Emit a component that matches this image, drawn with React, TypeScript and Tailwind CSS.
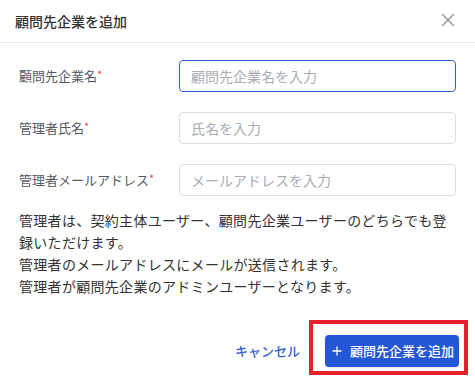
import { X, Plus } from "lucide-react";

const fields = [
  { label: "顧問先企業名", placeholder: "顧問先企業名を入力", focused: true },
  { label: "管理者氏名", placeholder: "氏名を入力", focused: false },
  { label: "管理者メールアドレス", placeholder: "メールアドレスを入力", focused: false },
];

function App() {
  return (
    <div
      className="relative w-[475px] h-[382px] bg-white text-[#333] overflow-hidden"
      style={{ fontFamily: '"Noto Sans CJK JP", "Noto Sans", sans-serif' }}
    >
      <div className="flex items-center justify-between h-[43px] pl-[15px] pr-[16px] border-b border-[#e6e7ea]">
        <h2 className="text-[14px] font-medium text-[#333]">顧問先企業を追加</h2>
        <X size={22} strokeWidth={1.4} className="text-[#8b909a] -mt-[2px]" />
      </div>

      <div className="px-[19px] pt-[17px]">
        <div className="flex flex-col gap-[20px]">
          {fields.map((f) => (
            <div key={f.label} className="flex items-center">
              <label className="w-[160px] shrink-0 text-[13px] text-[#555a63]">
                {f.label}
                <span className="text-[#e5484d] text-[11px] align-top">*</span>
              </label>
              <input
                autoFocus={f.focused}
                placeholder={f.placeholder}
                className={
                  f.focused
                    ? "w-[279px] h-[32px] rounded-[4px] border border-[#2f64d8] px-[11px] text-[14px] placeholder:text-[#a9adb4] outline-none"
                    : "w-[279px] h-[32px] rounded-[4px] border border-[#dcdee2] px-[11px] text-[14px] placeholder:text-[#a9adb4] outline-none"
                }
              />
            </div>
          ))}
        </div>

        <p className="mt-[13px] text-[14px] leading-[22px] tracking-[0.3px] text-[#333]">
          管理者は、契約主体ユーザー、顧問先企業ユーザーのどちらでも登録いただけます。
          <br />
          管理者のメールアドレスにメールが送信されます。
          <br />
          管理者が顧問先企業のアドミンユーザーとなります。
        </p>
      </div>

      <div className="flex items-center justify-end gap-[25px] pr-[16px] mt-[38px]">
        <button className="text-[13px] font-medium text-[#3463d1]">キャンセル</button>
        <button className="flex items-center gap-[6px] h-[32px] w-[134px] justify-center rounded-[4px] bg-[#2456d6] text-white text-[13px] font-medium shadow-sm">
          <Plus size={14} strokeWidth={2.2} />
          顧問先企業を追加
        </button>
      </div>

      <div className="absolute left-[309px] top-[320px] w-[159px] h-[55px] border-4 border-[#e5202a] pointer-events-none" />
    </div>
  );
}

export default App;
